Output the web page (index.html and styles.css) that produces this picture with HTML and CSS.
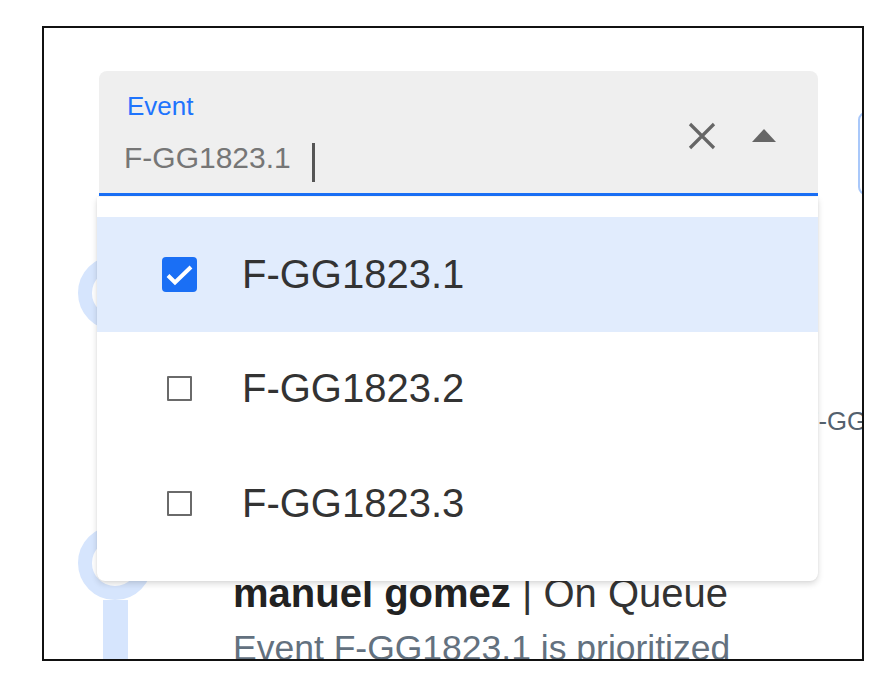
FILE: index.html
```html
<!DOCTYPE html>
<html lang="en">
<head>
<meta charset="utf-8">
<title>Event filter</title>
<link rel="stylesheet" href="styles.css">
</head>
<body>
<div class="frame">
  <div class="page">
    <div class="toolbar">
      <div class="combo">
        <div class="field">
          <div class="field-main">
            <label class="field-label">Event</label>
            <div class="field-value"><span class="value-text">F-GG1823.1</span><span class="caret"></span></div>
          </div>
          <div class="field-icons">
            <svg class="icon-clear" width="28" height="28" viewBox="0 0 28 28" aria-hidden="true"><path d="M2 2 L26 26 M26 2 L2 26" stroke="#666" stroke-width="3.2" fill="none"/></svg>
            <svg class="icon-toggle" width="24" height="13" viewBox="0 0 24 13" aria-hidden="true"><polygon points="0,13 12,0 24,13" fill="#666"/></svg>
          </div>
        </div>
        <ul class="listbox">
          <li class="option selected">
            <span class="check-cell"><span class="check checked"><svg width="35" height="35" viewBox="0 0 35 35" aria-hidden="true"><polyline points="6,18.5 13,25.5 29,10" stroke="#fff" stroke-width="4" fill="none"/></svg></span></span>
            <span class="option-label">F-GG1823.1</span>
          </li>
          <li class="option">
            <span class="check-cell"><span class="check"></span></span>
            <span class="option-label">F-GG1823.2</span>
          </li>
          <li class="option">
            <span class="check-cell"><span class="check"></span></span>
            <span class="option-label">F-GG1823.3</span>
          </li>
        </ul>
      </div>
      <button class="side-btn" type="button"></button>
    </div>

    <ol class="timeline">
      <li class="tl-item">
        <div class="tl-marker"><span class="tl-dot"></span><span class="tl-stem"></span></div>
        <div class="tl-body">
          <p class="tl-title"><b>manuel gomez</b> | Assigned</p>
          <p class="tl-sub">Event F-GG1823.2 was updated</p>
          <p class="tl-note">Event F-GG1823.2 was merged into parent event F-GG1823.1</p>
        </div>
      </li>
      <li class="tl-item">
        <div class="tl-marker"><span class="tl-dot"></span><span class="tl-stem"></span></div>
        <div class="tl-body">
          <p class="tl-title"><b>manuel gomez</b> | On Queue</p>
          <p class="tl-sub">Event F-GG1823.1 is prioritized</p>
        </div>
      </li>
    </ol>
  </div>
</div>
</body>
</html>
```

FILE: styles.css
```css
* { box-sizing: border-box; }

html, body {
  margin: 0;
  padding: 0;
  background: #fff;
  font-family: "Liberation Sans", Arial, sans-serif;
}

.frame {
  margin: 26px 0 0 42px;
  width: 822px;
  height: 635px;
  border: 2px solid #111;
  overflow: hidden;
  position: relative;
  background: #fff;
}

.page {
  padding-top: 43px;
}

.toolbar {
  display: flex;
  align-items: flex-end;
  gap: 40px;
  padding-left: 55px;
}

.combo {
  position: relative;
  width: 719px;
  flex: none;
  z-index: 2;
}

.field {
  display: flex;
  align-items: center;
  background: #efefef;
  border-radius: 8px 8px 0 0;
  border-bottom: 3px solid #1a6ff5;
  padding: 20px 42px 15px 25px;
}

.field-main {
  flex: 1;
  display: flex;
  flex-direction: column;
}

.field-label {
  font-size: 26px;
  line-height: 30px;
  color: #1f74fd;
  padding-left: 3px;
}

.field-value {
  display: flex;
  align-items: flex-start;
  margin-top: 17px;
  height: 40px;
}

.value-text {
  font-size: 30px;
  line-height: 40px;
  color: #767676;
}

.caret {
  width: 3px;
  height: 39px;
  margin-left: 21px;
  margin-top: 5px;
  background: #555;
}

.field-icons {
  display: flex;
  align-items: center;
  gap: 36px;
  margin-top: 2px;
}

.icon-clear, .icon-toggle { display: block; }

.listbox {
  position: absolute;
  top: calc(100% + 1px);
  left: -2px;
  right: 0;
  margin: 0;
  padding: 20px 0;
  list-style: none;
  background: #fff;
  border-radius: 0 0 8px 8px;
  box-shadow: 0 3px 6px rgba(0, 0, 0, 0.14), 0 0 2px rgba(0, 0, 0, 0.08);
}

.option {
  display: flex;
  align-items: center;
  height: 114.5px;
  padding-left: 60px;
}

.option.selected {
  background: #e1ecfd;
}

.check-cell {
  width: 44px;
  display: flex;
  justify-content: center;
  align-items: center;
}

.check {
  display: block;
  width: 25px;
  height: 25px;
  border: 2px solid #6a6a6a;
  border-radius: 1px;
  background: #fff;
}

.check.checked {
  width: 35px;
  height: 35px;
  border: none;
  border-radius: 4px;
  background: #1a6ff5;
}

.check.checked svg { display: block; }

.option-label {
  margin-left: 41px;
  font-size: 40px;
  color: #333;
}

.side-btn {
  flex: none;
  width: 120px;
  height: 83px;
  margin-bottom: 1px;
  border: 2px solid #a9c8fa;
  border-radius: 8px;
  background: #fff;
  padding: 0;
}

.timeline {
  list-style: none;
  margin: 60px 0 0;
  padding: 0 0 0 34px;
}

.tl-item {
  display: flex;
  min-height: 270px;
}

.tl-marker {
  width: 74px;
  flex: none;
  display: flex;
  flex-direction: column;
  align-items: center;
}

.tl-dot {
  width: 74px;
  height: 74px;
  border: 14px solid #d6e5fd;
  border-radius: 50%;
  background: #fff;
  flex: none;
}

.tl-stem {
  flex: 1;
  width: 25px;
  background: #d6e5fd;
  margin-left: 1px;
}

.tl-body {
  padding-top: 44px;
  padding-left: 81px;
  white-space: nowrap;
}

.tl-title {
  margin: 0;
  font-size: 40px;
  line-height: 46px;
  color: #333;
}

.tl-title b {
  color: #222;
}

.tl-sub {
  margin: 12px 0 0;
  font-size: 35.5px;
  line-height: 41px;
  color: #63717f;
}

.tl-note {
  margin: 7px 0 0;
  font-size: 25.75px;
  line-height: 30px;
  color: #54616e;
}
```
